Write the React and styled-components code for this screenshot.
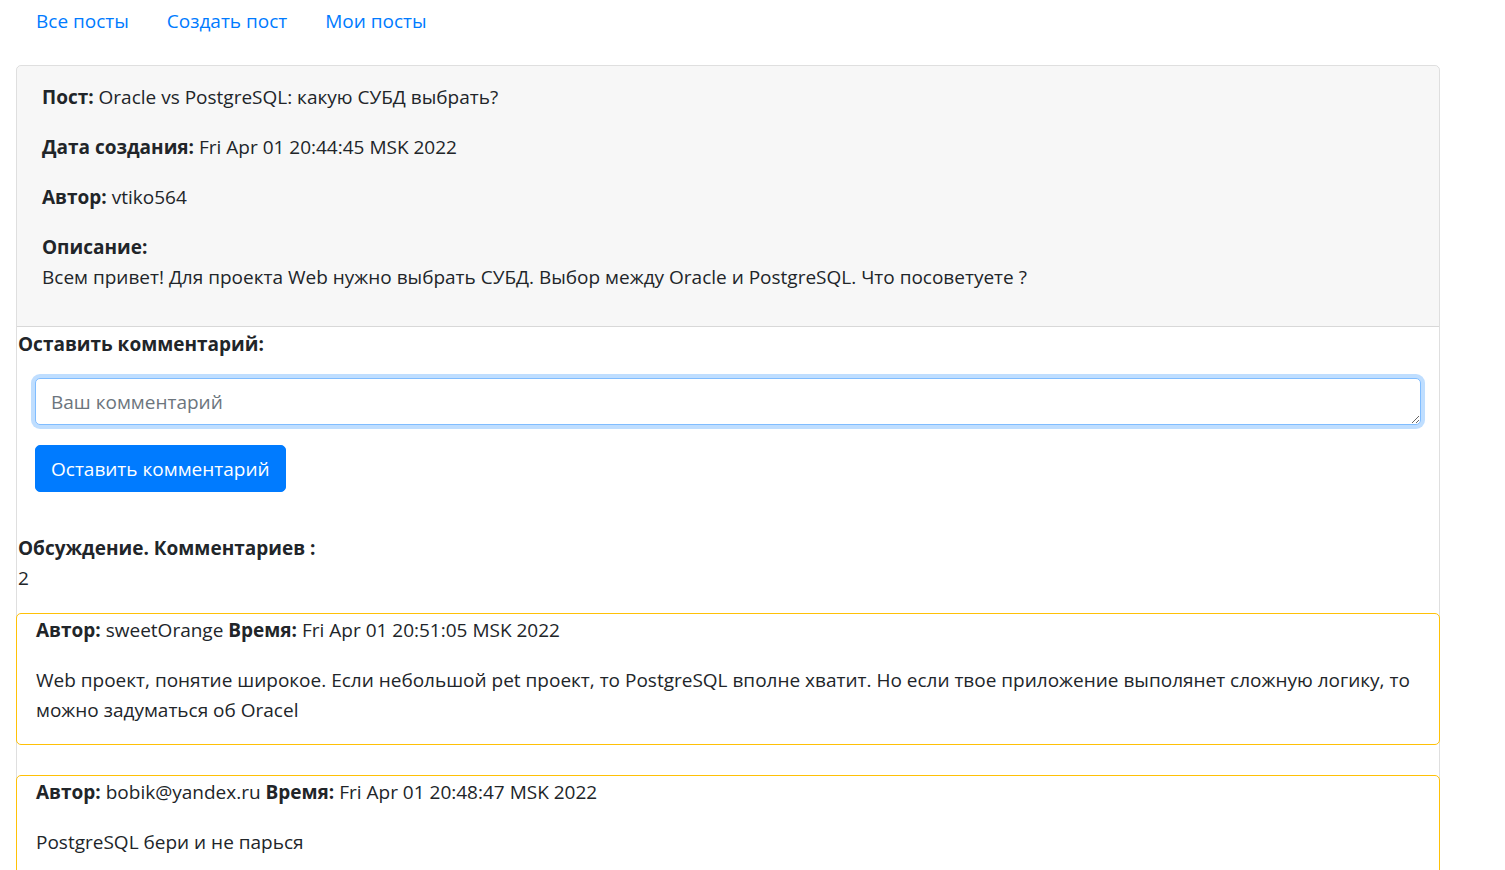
import styled, { createGlobalStyle } from "styled-components";

const GlobalStyle = createGlobalStyle`
  html, body {
    margin: 0;
    padding: 0;
    background: #fff;
    overflow: hidden;
  }
  body {
    font-family: "Open Sans", "Noto Sans", sans-serif;
    font-size: 19px;
    line-height: 30px;
    color: #212529;
  }
  * {
    box-sizing: border-box;
  }
`;

const Page = styled.div`
  padding: 6px 0 0 17px;
  width: 1440px;
`;

const Nav = styled.nav`
  display: flex;
  margin-bottom: 29px;
`;

const NavLink = styled.a`
  padding: 0 19px;
  color: #007bff;
  text-decoration: none;
  cursor: pointer;
`;

const Card = styled.div`
  width: 1424px;
  margin-left: -1px;
  border: 1px solid rgba(0, 0, 0, 0.125);
  border-radius: 5px;
  padding-bottom: 120px;
`;

const CardHeader = styled.div`
  background: rgba(0, 0, 0, 0.03);
  border-bottom: 1px solid rgba(0, 0, 0, 0.125);
  border-radius: 4px 4px 0 0;
  padding: 16px 25px 14px;
`;

const Field = styled.p`
  margin: 0 0 20px;
`;

const Label = styled.b`
  font-weight: 700;
`;

const BlockLabel = styled.div`
  font-weight: 700;
  padding-left: ${(p) => p.$indent || 0}px;
  margin-top: ${(p) => p.$top || 0}px;
`;

const Form = styled.form`
  padding: 19px 18px 0;
`;

const TextArea = styled.textarea`
  display: block;
  width: 100%;
  height: 47px;
  padding: 8px 15px 7px;
  font: inherit;
  color: #495057;
  background: #fff;
  border: 1px solid #80bdff;
  border-radius: 5px;
  box-shadow: 0 0 0 4px rgba(0, 123, 255, 0.25);
  outline: none;
  resize: vertical;

  &::placeholder {
    color: #6c757d;
  }
`;

const Button = styled.button`
  margin: 20px 0 40px;
  height: 47px;
  padding: 1px 15px 0;
  font: inherit;
  color: #fff;
  background: #007bff;
  border: 1px solid #007bff;
  border-radius: 5px;
  cursor: pointer;
`;

const Count = styled.div`
  padding-left: 1px;
`;

const CommentCard = styled.div`
  margin: ${(p) => (p.$first ? 20 : 30)}px -1px 0;
  border: 1px solid #ffc107;
  border-radius: 5px;
  padding: 1px 19px 0;
`;

const CommentField = styled.p`
  margin: 0 0 20px;
  &:last-child {
    margin-bottom: 19px;
  }
`;

const comments = [
  {
    author: "sweetOrange",
    time: "Fri Apr 01 20:51:05 MSK 2022",
    text: "Web проект, понятие широкое. Если небольшой pet проект, то PostgreSQL вполне хватит. Но если твое приложение выполянет сложную логику, то можно задуматься об Oracel",
  },
  {
    author: "bobik@yandex.ru",
    time: "Fri Apr 01 20:48:47 MSK 2022",
    text: "PostgreSQL бери и не парься",
  },
];

export default function App() {
  return (
    <Page>
      <GlobalStyle />
      <Nav>
        <NavLink>Все посты</NavLink>
        <NavLink>Создать пост</NavLink>
        <NavLink>Мои посты</NavLink>
      </Nav>
      <Card>
        <CardHeader>
          <Field>
            <Label>Пост:</Label> Oracle vs PostgreSQL: какую СУБД выбрать?
          </Field>
          <Field>
            <Label>Дата создания:</Label> Fri Apr 01 20:44:45 MSK 2022
          </Field>
          <Field>
            <Label>Автор:</Label> vtiko564
          </Field>
          <Field>
            <Label>Описание:</Label>
            <br />
            Всем привет! Для проекта Web нужно выбрать СУБД. Выбор между Oracle и PostgreSQL. Что посоветуете ?
          </Field>
        </CardHeader>
        <BlockLabel $indent={1} $top={2}>Оставить комментарий:</BlockLabel>
        <Form onSubmit={(e) => e.preventDefault()}>
          <TextArea rows={1} placeholder="Ваш комментарий" />
          <Button type="submit">Оставить комментарий</Button>
        </Form>
        <BlockLabel $indent={1} $top={1}>Обсуждение. Комментариев :</BlockLabel>
        <Count>2</Count>
        {comments.map((c, i) => (
          <CommentCard key={i} $first={i === 0}>
            <CommentField>
              <Label>Автор:</Label> {c.author} <Label>Время:</Label> {c.time}
            </CommentField>
            <CommentField>{c.text}</CommentField>
          </CommentCard>
        ))}
      </Card>
    </Page>
  );
}
